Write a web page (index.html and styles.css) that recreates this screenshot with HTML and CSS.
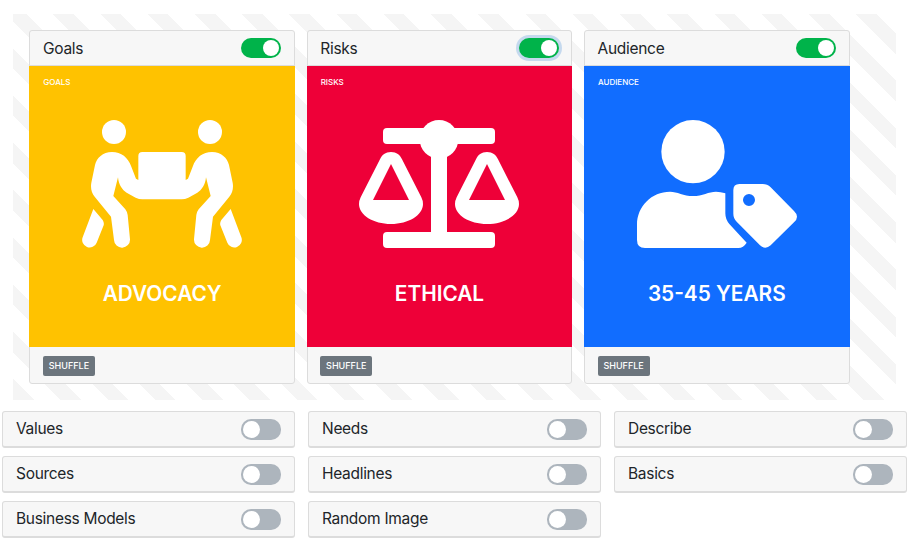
FILE: index.html
```html
<!DOCTYPE html>
<html lang="en">
<head>
  <meta charset="UTF-8">
  <meta name="viewport" content="width=device-width, initial-scale=1.0">
  <title>Idea Cards</title>
  <link rel="stylesheet" href="styles.css">
</head>
<body>
  <div class="stage">
    <div class="card">
      <div class="card-header">
        <span>Goals</span>
        <span class="switch on"></span>
      </div>
      <div class="card-body yellow">
        <div class="card-label">Goals</div>
        <svg class="card-icon" viewBox="66 60 480 384">
          <circle cx="162" cy="96" r="36"/>
          <circle cx="450" cy="96" r="36"/>
          <path d="M156 156C184 156 204 172 214 200L228 236L235 240V168A12 12 0 0 1 247 156H365A12 12 0 0 1 377 168V240L384 236L398 200C408 172 428 156 456 156C484 156 502 174 507 195L518 248C521 265 517 280 508 290L459 350L450 420A24 24 0 0 1 402 418L409 345Q410 336 416 328L452 288L438 232C436 255 425 270 412 278L385 293Q375 298 365 298H247Q237 298 227 293L200 278C187 270 176 255 174 232L160 288L196 328Q202 336 203 345L210 418A24 24 0 0 1 162 420L153 350L104 290C95 280 91 265 94 248L105 195C110 174 128 156 156 156Z"/>
          <path d="M100 327L128 360Q133 368 131 376L110 428A22 22 0 0 1 68 412Z"/>
          <path d="M512 327L484 360Q479 368 481 376L502 428A22 22 0 0 0 544 412Z"/>
        </svg>
        <div class="card-title">ADVOCACY</div>
      </div>
      <div class="card-footer"><span class="badge">Shuffle</span></div>
    </div>

    <div class="card">
      <div class="card-header">
        <span>Risks</span>
        <span class="switch on focus"></span>
      </div>
      <div class="card-body red">
        <div class="card-label">Risks</div>
        <svg class="card-icon" viewBox="57 60 480 384">
          <rect x="129" y="84" width="336" height="48" rx="12"/>
          <circle cx="297" cy="118" r="58"/>
          <rect x="273" y="150" width="48" height="260"/>
          <rect x="129" y="396" width="336" height="48" rx="12"/>
          <path fill-rule="evenodd" d="M153 156C170 156 180 165 186 178L244 292Q249 302 249 312C249 345 206 372 153 372C100 372 57 345 57 312Q57 302 62 292L120 178C126 165 136 156 153 156ZM153 192L99 300H207Z"/>
          <path fill-rule="evenodd" d="M441 156C458 156 468 165 474 178L532 292Q537 302 537 312C537 345 494 372 441 372C388 372 345 345 345 312Q345 302 350 292L408 178C414 165 424 156 441 156ZM441 192L387 300H495Z"/>
        </svg>
        <div class="card-title">ETHICAL</div>
      </div>
      <div class="card-footer"><span class="badge">Shuffle</span></div>
    </div>

    <div class="card">
      <div class="card-header">
        <span>Audience</span>
        <span class="switch on"></span>
      </div>
      <div class="card-body blue">
        <div class="card-label">Audience</div>
        <svg class="card-icon" viewBox="51 60 480 384">
          <circle cx="219" cy="155" r="95"/>
          <path d="M150 275C172 275 190 288 219 288C248 288 266 275 288 275Q302 275 316 280V340Q316 358 328 372L380 428Q370 444 355 444H75Q51 444 51 420V374C51 319 95 275 150 275Z"/>
          <path fill-rule="evenodd" d="M358 252H428Q442 252 452 262L522 333Q540 350 522 367L452 436Q436 450 420 436L350 365Q340 355 340 341V270Q340 252 358 252ZM387 282A18 18 0 1 0 387 318A18 18 0 1 0 387 282Z"/>
        </svg>
        <div class="card-title">35-45 YEARS</div>
      </div>
      <div class="card-footer"><span class="badge">Shuffle</span></div>
    </div>
  </div>

  <div class="options">
    <div class="option"><span>Values</span><span class="switch"></span></div>
    <div class="option"><span>Needs</span><span class="switch"></span></div>
    <div class="option"><span>Describe</span><span class="switch"></span></div>
    <div class="option"><span>Sources</span><span class="switch"></span></div>
    <div class="option"><span>Headlines</span><span class="switch"></span></div>
    <div class="option"><span>Basics</span><span class="switch"></span></div>
    <div class="option"><span>Business Models</span><span class="switch"></span></div>
    <div class="option"><span>Random Image</span><span class="switch"></span></div>
  </div>
</body>
</html>
```

FILE: styles.css
```css
* {
  box-sizing: border-box;
}

body {
  margin: 0;
  background: #fff;
  color: #212529;
  font-family: "Inter", "Liberation Sans", sans-serif;
  font-size: 15.5px;
  letter-spacing: -0.3px;
}

.stage {
  display: grid;
  grid-template-columns: repeat(3, 265.67px);
  gap: 11.67px;
  width: 883px;
  margin: 14px 0 0 13px;
  padding: 16px 46px 16px 16.33px;
  background: repeating-linear-gradient(45deg, #fff 0, #fff 0.5px, #f5f5f5 0.5px, #f5f5f5 15px, #fff 15px, #fff 33.4px);
}

.card {
  display: flex;
  flex-direction: column;
  height: 354px;
  background: #f7f7f7;
  border: 1px solid #dcdcdc;
  border-radius: 3px;
}

.card-header {
  display: flex;
  align-items: center;
  justify-content: space-between;
  height: 35px;
  padding: 0 12.67px;
  border-bottom: 1px solid #dcdcdc;
}

.card-body {
  display: flex;
  flex-direction: column;
  height: 281px;
  margin: 0 -1px;
  padding: 11px 14px 0;
  color: #fff;
}

.yellow {
  background: #ffc200;
}

.red {
  background: #ee0038;
}

.blue {
  background: #116dff;
}

.card-label {
  font-size: 8px;
  line-height: 10px;
  font-weight: 500;
  letter-spacing: 0;
  text-transform: uppercase;
}

.card-icon {
  display: block;
  width: 160px;
  height: 128px;
  margin: 33px auto 0;
  fill: #fff;
}

.card-title {
  margin-top: 34px;
  font-size: 20.8px;
  line-height: 24px;
  font-weight: 600;
  letter-spacing: 0;
  text-align: center;
}

.card-footer {
  flex: 1;
  display: flex;
  align-items: center;
  padding: 2px 12.67px 0;
}

.badge {
  height: 20px;
  padding: 0 5.8px;
  background: #6c757d;
  border-radius: 2px;
  color: #fff;
  font-size: 9px;
  font-weight: 500;
  letter-spacing: 0;
  line-height: 20px;
  text-transform: uppercase;
}

.switch {
  position: relative;
  width: 40px;
  height: 20px;
  background: #adb5bd;
  border-radius: 10px;
}

.switch::after {
  content: "";
  position: absolute;
  top: 2px;
  left: 2px;
  width: 16px;
  height: 16px;
  background: #fff;
  border-radius: 50%;
}

.switch.on {
  background: #00b34a;
}

.switch.on::after {
  left: 22px;
}

.switch.focus {
  box-shadow: 0 0 0 3px #c5d9ee;
}

.options {
  display: grid;
  grid-template-columns: repeat(3, 293px);
  gap: 8px 13px;
  margin: 11px 0 0 2px;
}

.option {
  display: flex;
  align-items: center;
  justify-content: space-between;
  height: 37px;
  padding: 0 13px 2px;
  background: #f7f7f7;
  border: 1px solid #dcdcdc;
  border-bottom-width: 2px;
  border-radius: 3px;
}

.option .switch {
  height: 21px;
  top: 1px;
}

.option .switch::after {
  width: 17px;
  height: 17px;
}
```
